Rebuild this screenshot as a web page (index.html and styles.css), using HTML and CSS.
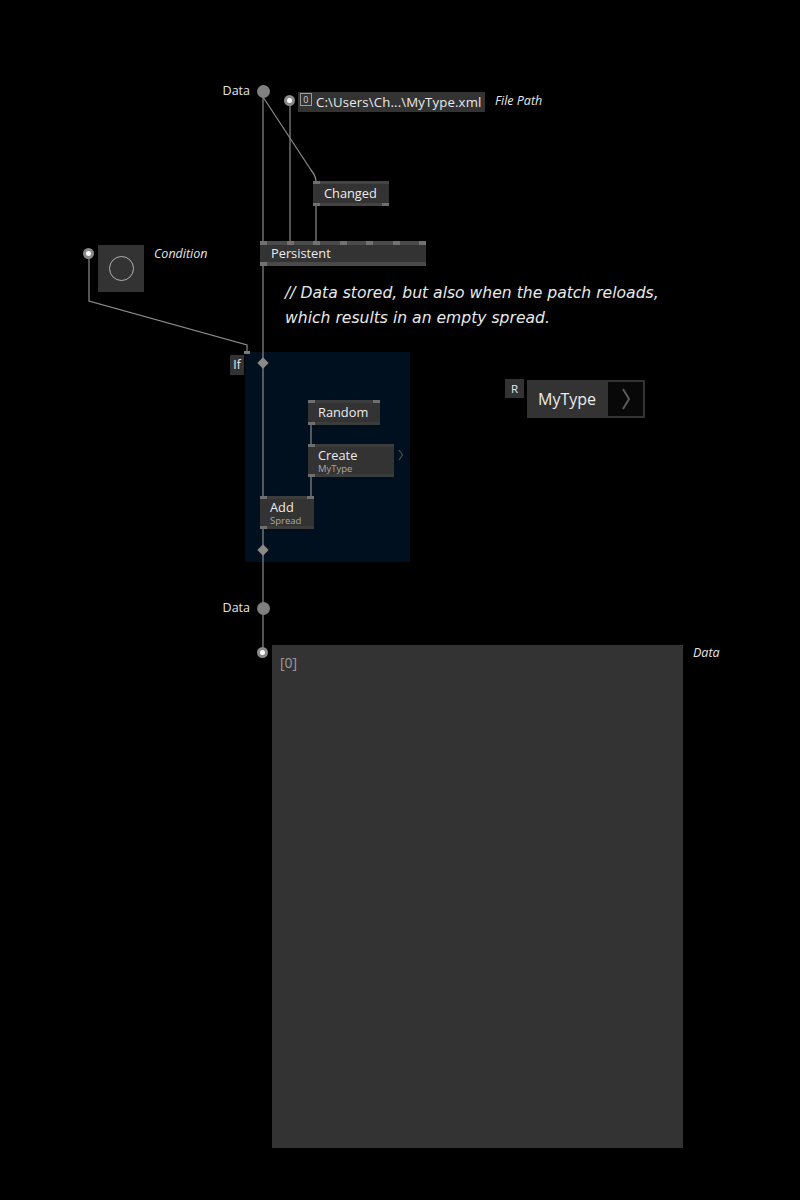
FILE: index.html
```html
<!DOCTYPE html>
<html>
<head>
<meta charset="utf-8">
<link rel="stylesheet" href="styles.css">
</head>
<body>
<div class="canvas">
  <div class="if-region"></div>

  <svg class="wires" width="800" height="1200" viewBox="0 0 800 1200">
    <g fill="none" stroke="#8c8c8c" stroke-width="1.2">
      <path d="M263 91 V653"/>
      <path d="M263 97 L311 170 Q316 176 316 182 V241"/>
      <path d="M290 101 V241"/>
      <path d="M89 254 V301 L247 345 V352"/>
      <path d="M311 425 V444"/>
      <path d="M311 477 V496"/>
    </g>
  </svg>

  <!-- Data input pad -->
  <div class="pad-label in-data">Data</div>
  <div class="pad pad-data-in"></div>

  <!-- File path IOBox -->
  <div class="io-pin pin-file"></div>
  <div class="iobox-text file-box"><span class="zero">0</span><span>C:\Users\Ch...\MyType.xml</span></div>
  <div class="io-label file-label">File Path</div>

  <!-- Changed -->
  <div class="node changed">
    <div class="strip"><span class="pin"></span></div>
    <div class="body"><span class="title">Changed</span></div>
    <div class="strip"><span class="pin"></span><span class="pin"></span></div>
  </div>

  <!-- Persistent -->
  <div class="node persistent">
    <div class="strip spread"><span class="pin"></span><span class="pin"></span><span class="pin"></span><span class="pin"></span><span class="pin"></span><span class="pin"></span><span class="pin"></span></div>
    <div class="body"><span class="title">Persistent</span></div>
    <div class="strip"><span class="pin"></span></div>
  </div>

  <!-- Condition toggle -->
  <div class="io-pin pin-cond"></div>
  <div class="toggle"><span class="ring"></span></div>
  <div class="io-label cond-label">Condition</div>

  <!-- Comment -->
  <div class="comment">// Data stored, but also when the patch reloads,<br>which results in an empty spread.</div>

  <!-- If region -->
  <div class="if-tag">If</div>
  <div class="if-pin"></div>
  <div class="diamond d-top"></div>
  <div class="diamond d-bottom"></div>

  <div class="node random">
    <div class="strip"><span class="pin"></span><span class="pin"></span></div>
    <div class="body"><span class="title">Random</span></div>
    <div class="strip"><span class="pin"></span></div>
  </div>

  <div class="node create">
    <div class="strip"><span class="pin"></span></div>
    <div class="body"><span class="title">Create</span><span class="sub">MyType</span></div>
    <div class="strip"><span class="pin"></span></div>
  </div>
  <svg class="chev-small" width="6" height="12" viewBox="0 0 6 12"><path d="M1 1 L4.5 6 L1 11" fill="none" stroke="#4e4e4e" stroke-width="1.2"/></svg>

  <div class="node add">
    <div class="strip"><span class="pin"></span><span class="pin"></span></div>
    <div class="body"><span class="title">Add</span><span class="sub">Spread</span></div>
    <div class="strip"><span class="pin"></span></div>
  </div>

  <!-- Type definition -->
  <div class="rtag">R</div>
  <div class="typebox">
    <span class="type-name">MyType</span>
    <span class="type-open"><svg width="10" height="22" viewBox="0 0 10 22"><path d="M2 1 L8 11 L2 21" fill="none" stroke="#5a5a5a" stroke-width="2"/></svg></span>
  </div>

  <!-- Output pad -->
  <div class="pad-label out-data">Data</div>
  <div class="pad pad-data-out"></div>

  <!-- Bottom IOBox -->
  <div class="io-pin pin-out"></div>
  <div class="spread-box"><span class="idx">[0]</span></div>
  <div class="io-label out-label">Data</div>
</div>
</body>
</html>
```

FILE: styles.css
```css
html, body {
  margin: 0;
  padding: 0;
  background: #000;
}
.canvas {
  position: relative;
  width: 800px;
  height: 1200px;
  background: #000;
  overflow: hidden;
  font-family: "Open Sans", "Noto Sans", "DejaVu Sans", sans-serif;
  color: #e8e8e8;
}
.wires {
  position: absolute;
  left: 0;
  top: 0;
}
.if-region {
  position: absolute;
  left: 245px;
  top: 352px;
  width: 165px;
  height: 210px;
  background: #00101e;
}

/* pads */
.pad {
  position: absolute;
  width: 13px;
  height: 13px;
  border-radius: 50%;
  background: #808080;
}
.pad-data-in { left: 257px; top: 85px; }
.pad-data-out { left: 257px; top: 602px; }
.pad-label {
  position: absolute;
  font-size: 12.5px;
  line-height: 16px;
  color: #e6e6e6;
  text-align: right;
  width: 60px;
}
.in-data { left: 190px; top: 83px; }
.out-data { left: 190px; top: 600px; }

/* io pins */
.io-pin {
  position: absolute;
  width: 5px;
  height: 5px;
  border-radius: 50%;
  background: #fff;
  border: 3.5px solid #8a8a8a;
}
.pin-file { left: 284px; top: 95px; }
.pin-cond { left: 83px; top: 248px; }
.pin-out { left: 257px; top: 647px; }

.io-label {
  position: absolute;
  font-style: italic;
  font-size: 12.5px;
  line-height: 16px;
  color: #e6e6e6;
}
.file-label { left: 495px; top: 93px; }
.cond-label { left: 154px; top: 246px; }
.out-label { left: 693px; top: 645px; }

.iobox-text {
  position: absolute;
  display: flex;
  align-items: center;
  gap: 4px;
  background: #333;
  font-size: 13.2px;
  color: #e8e8e8;
}
.file-box {
  left: 298px;
  top: 92px;
  width: 187px;
  height: 20px;
  padding-left: 2px;
  box-sizing: border-box;
  letter-spacing: 0.15px;
  white-space: nowrap;
}
.zero {
  display: inline-flex;
  align-items: center;
  justify-content: center;
  width: 10px;
  height: 11px;
  border: 1px solid #9a9a9a;
  font-size: 9px;
  line-height: 11px;
  color: #d0d0d0;
  align-self: flex-start;
  margin-top: 1px;
}

/* nodes */
.node {
  position: absolute;
  display: flex;
  flex-direction: column;
  background: #333;
}
.node .strip {
  height: 3px;
  display: flex;
  justify-content: space-between;
  background: #3c3c3c;
}
.node .pin {
  width: 7px;
  height: 3px;
  background: #6f6f6f;
}
.node .body {
  flex: 1;
  display: flex;
  flex-direction: column;
  justify-content: center;
  padding-left: 10px;
}
.title {
  font-size: 12.8px;
  line-height: 15px;
  color: #ececec;
}
.sub {
  font-size: 9.5px;
  line-height: 11px;
  color: #a8a8a8;
}
.changed { left: 313px; top: 181px; width: 76px; height: 25px; }
.changed .body { padding-left: 11px; }
.changed .strip { background: #444; }
.persistent { left: 260px; top: 241px; width: 166px; height: 25px; }
.persistent .body { padding-left: 11px; }
.persistent .strip { height: 4px; background: #4a4a4a; }
.persistent .pin { height: 4px; background: #727272; }
.random { left: 308px; top: 400px; width: 72px; height: 25px; }
.create { left: 308px; top: 444px; width: 86px; height: 33px; }
.add { left: 260px; top: 496px; width: 54px; height: 33px; }

.chev-small {
  position: absolute;
  left: 398px;
  top: 449px;
}

/* toggle */
.toggle {
  position: absolute;
  left: 98px;
  top: 245px;
  width: 46px;
  height: 47px;
  background: #333;
  display: flex;
  align-items: center;
  justify-content: center;
}
.ring {
  width: 23px;
  height: 23px;
  border-radius: 50%;
  border: 1.5px solid #b0b0b0;
}

/* comment */
.comment {
  position: absolute;
  left: 285px;
  top: 281px;
  font-family: "DejaVu Sans", "Noto Sans", sans-serif;
  font-style: italic;
  font-size: 15.6px;
  line-height: 25px;
  color: #e8e8e8;
  white-space: nowrap;
}

/* If */
.if-tag {
  position: absolute;
  left: 230px;
  top: 355px;
  width: 14px;
  height: 20px;
  background: #333;
  font-size: 12px;
  line-height: 20px;
  text-align: center;
  color: #ececec;
}
.if-pin {
  position: absolute;
  left: 244px;
  top: 351px;
  width: 6px;
  height: 3px;
  background: #7a7a7a;
}
.diamond {
  position: absolute;
  width: 8px;
  height: 8px;
  background: #8a8a8a;
  transform: rotate(45deg);
}
.d-top { left: 259px; top: 359px; }
.d-bottom { left: 259px; top: 546px; }

/* type */
.rtag {
  position: absolute;
  left: 505px;
  top: 379px;
  width: 19px;
  height: 19px;
  background: #333;
  font-size: 11.5px;
  line-height: 19px;
  text-align: center;
  color: #e8e8e8;
}
.typebox {
  position: absolute;
  left: 527px;
  top: 380px;
  width: 118px;
  height: 38px;
  box-sizing: border-box;
  background: #333;
  border: 2px solid #333;
  display: flex;
  align-items: stretch;
}
.type-name {
  flex: 1;
  display: flex;
  align-items: center;
  padding-left: 9px;
  font-size: 16px;
  color: #ececec;
}
.type-open {
  width: 35px;
  background: #080808;
  display: flex;
  align-items: center;
  justify-content: center;
}

/* bottom box */
.spread-box {
  position: absolute;
  left: 272px;
  top: 645px;
  width: 411px;
  height: 503px;
  background: #333;
  padding: 6px 8px;
  box-sizing: border-box;
}
.idx {
  font-size: 14px;
  color: #9a9a9a;
}
```
